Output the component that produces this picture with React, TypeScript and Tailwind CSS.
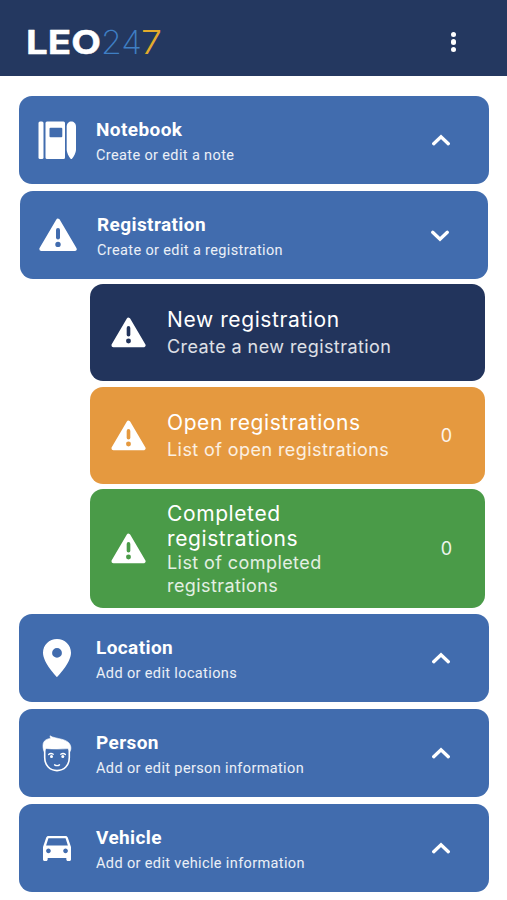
import React, { useState } from 'react';

interface IconProps {
    className?: string;
}

const NotebookIcon = ({ className }: IconProps) => (
    <svg viewBox="0 0 38 38" className={className} fill="currentColor">
        <rect x="0.5" y="0.5" width="5" height="37.5" rx="1.5" />
        <path fillRule="evenodd" d="M9 .5h16.500a1.500 1.500 0 0 1 1.500 1.500v34.500a1.500 1.500 0 0 1-1.500 1.500H9a1.500 1.500 0 0 1-1.500-1.500V2A1.500 1.500 0 0 1 9 .5Zm3.500 6.200a1 1 0 0 0-1 1v7.600a1 1 0 0 0 1 1h10.800a1 1 0 0 0 1-1V7.700a1 1 0 0 0-1-1Z" />
        <path d="M28.700 5.500C28.700 2.500 30.800.5 33.300.5S38 2.500 38 5.500V29c0 2.500-2.200 6.500-3.800 8.400q-.9 1-1.800 0C30.800 35.500 28.700 31.500 28.700 29Z" />
    </svg>
);

const WarningIcon = ({ className }: IconProps) => (
    <svg viewBox="0 0 38 34" className={className}>
        <path d="M19 2.800 35.600 31H2.400Z" fill="currentColor" stroke="currentColor" strokeWidth="4.200" strokeLinejoin="round" />
        <path d="M19 12v7.500" fill="none" className="stroke-(--card)" strokeWidth="4" strokeLinecap="round" />
        <circle cx="19" cy="26.400" r="2.700" className="fill-(--card)" />
    </svg>
);

const PinIcon = ({ className }: IconProps) => (
    <svg viewBox="0 0 28 38" className={className} fill="currentColor">
        <path fillRule="evenodd" d="M14 0C6.200 0 0 6.100 0 13.700 0 24 14 38 14 38s14-14 14-24.300C28 6.100 21.800 0 14 0Zm0 9a4.900 4.900 0 1 1 0 9.800A4.900 4.900 0 0 1 14 9Z" />
    </svg>
);

const PersonIcon = ({ className }: IconProps) => (
    <svg viewBox="0 0 30 37" className={className} fill="none" stroke="currentColor" strokeLinecap="round">
        <path d="M2.700 13v9.500C2.700 30.500 8 35.600 15 35.600s12.300-5.100 12.300-13.100V13" strokeWidth="1.600" />
        <path d="M2.200 16.800C.9 14.300.7 10.500 1.300 8.200 2.200 5.200 5 3.800 8.500 3.400L8 .8c3 1.900 7 2.200 11.500 3.400 5 1.200 8.800 3.600 9.300 7.800.2 2-.1 3.600-1 4.800l-1.600-3.200c-7 .5-15 .6-22.400-.1Z" fill="currentColor" strokeWidth=".6" strokeLinejoin="round" />
        <path d="M6.600 19.500c1.300-1.200 3.200-1.200 4.700-.3M18.700 19.200c1.500-.9 3.400-.9 4.700.3" strokeWidth="1.300" />
        <circle cx="9.500" cy="21.400" r="1.500" fill="currentColor" stroke="none" />
        <circle cx="20.800" cy="21.400" r="1.500" fill="currentColor" stroke="none" />
        <path d="M12.600 29.800c1.400.9 3.500.9 4.900 0" strokeWidth="1.400" />
    </svg>
);

const CarIcon = ({ className }: IconProps) => (
    <svg viewBox="3 5 18 16" preserveAspectRatio="none" className={className} fill="currentColor">
        <path d="M18.920 6.010C18.720 5.420 18.160 5 17.500 5h-11c-.66 0-1.210.42-1.420 1.010L3 12v8c0 .55.45 1 1 1h1c.55 0 1-.45 1-1v-1h12v1c0 .55.45 1 1 1h1c.55 0 1-.45 1-1v-8l-2.080-5.990zM6.500 16c-.83 0-1.500-.67-1.500-1.500S5.670 13 6.500 13s1.500.67 1.500 1.500S7.330 16 6.500 16zm11 0c-.83 0-1.500-.67-1.500-1.500s.67-1.500 1.500-1.500 1.500.67 1.500 1.500-.67 1.500-1.500 1.500zM5 11l1.500-4.500h11L19 11H5z" />
    </svg>
);

const Chevron = ({ open }: { open: boolean }) => (
    <svg viewBox="0 0 20 12" className={open ? 'mt-px w-5 h-3 rotate-180' : 'w-5 h-3'} fill="none" stroke="currentColor" strokeWidth="3.300">
        <path d="m2.700 9.700 7.300-7 7.300 7" strokeLinecap="round" />
    </svg>
);

const Logo = () => (
    <svg width="142" height="48" viewBox="0 0 142 48" className="font-[Inter,sans-serif] text-[33px]">
        <text x="0" y="36" fontWeight="700" fill="#ffffff" stroke="#ffffff" strokeWidth="0.4" strokeLinejoin="round" textLength="75" lengthAdjust="spacingAndGlyphs">LEO</text>
        <text x="75" y="36" fontWeight="200" fill="#3f7fc4" textLength="41" lengthAdjust="spacingAndGlyphs">24</text>
        <text x="115" y="36" fontWeight="300" fill="#e3ab2c" textLength="21" lengthAdjust="spacingAndGlyphs">7</text>
    </svg>
);

interface SubItem {
    title: string;
    subtitle: string;
    count?: number;
    className: string;
}

const subItems: SubItem[] = [
    {
        title: 'New registration',
        subtitle: 'Create a new registration',
        className: 'h-[97px] mb-1.5 bg-[#22345c] [--card:#22345c] [--gap:3px]',
    },
    {
        title: 'Open registrations',
        subtitle: 'List of open registrations',
        count: 0,
        className: 'h-[97px] mb-[5px] bg-[#e5993f] [--card:#e5993f] [--gap:3px]',
    },
    {
        title: 'Completed registrations',
        subtitle: 'List of completed registrations',
        count: 0,
        className: 'h-[119px] bg-[#4a9b48] [--card:#4a9b48] [--gap:0px]',
    },
];

const SubCard = ({ title, subtitle, count, className }: SubItem) => (
    <div className={`flex items-center rounded-[13px] pl-[21px] pr-[33px] text-white ${className}`}>
        <WarningIcon className="w-[35px] h-[31px] shrink-0" />
        <div className="ml-[21px] w-[230px] font-[Inter,sans-serif]">
            <div className="text-[21px] leading-[25px] tracking-[0.6px]">{title}</div>
            <div className="pt-(--gap) text-[18px] leading-[23px] tracking-[0.42px] text-white/85">{subtitle}</div>
        </div>
        {count !== undefined && (
            <span className="ml-auto font-[Inter,sans-serif] text-[18px] text-white/90">{count}</span>
        )}
    </div>
);

interface MenuCardProps {
    title: string;
    subtitle: string;
    icon: React.ReactNode;
    open?: boolean;
    onClick?: () => void;
    className?: string;
}

const MenuCard = ({ title, subtitle, icon, open = false, onClick, className = '' }: MenuCardProps) => (
    <button
        onClick={onClick}
        className={`flex items-center h-[88px] rounded-[13px] bg-[#416cae] [--card:#416cae] pl-[18px] pr-[38px] text-left text-white ${className}`}
    >
        <span className="flex w-[39px] justify-center">{icon}</span>
        <span className="ml-5 flex flex-col pt-1">
            <span className="text-[19px] leading-6 font-bold tracking-[0.4px]">{title}</span>
            <span className="mt-1 text-[14.5px] leading-5 tracking-[0.37px] text-white/90">{subtitle}</span>
        </span>
        <span className="ml-auto"><Chevron open={open} /></span>
    </button>
);

const App = () => {
    const [registrationOpen, setRegistrationOpen] = useState<boolean>(true);

    return (
        <div className="h-[900px] overflow-hidden bg-white font-[Roboto,sans-serif]">
            <header className="flex h-[76px] items-center justify-between bg-[#243860] pl-[26px] pr-[51px] pt-2">
                <Logo />
                <button className="flex flex-col gap-0.5" aria-label="Menu">
                    <span className="h-[5.5px] w-[5.5px] rounded-full bg-white" />
                    <span className="h-[5.5px] w-[5.5px] rounded-full bg-white" />
                    <span className="h-[5.5px] w-[5.5px] rounded-full bg-white" />
                </button>
            </header>
            <main className="flex flex-col pl-[19px] pr-[18px] pt-5">
                <MenuCard title="Notebook" subtitle="Create or edit a note" icon={<NotebookIcon className="w-[38px] h-[38px]" />} className="mb-[7px]" />
                <MenuCard
                    title="Registration"
                    subtitle="Create or edit a registration"
                    icon={<WarningIcon className="w-[38px] h-[34px]" />}
                    open={registrationOpen}
                    onClick={() => setRegistrationOpen(!registrationOpen)}
                    className="mx-px mb-[5px]"
                />
                {registrationOpen && (
                    <div className="mb-1.5 ml-[71px] mr-1 flex flex-col">
                        {subItems.map((item) => (
                            <SubCard key={item.title} {...item} />
                        ))}
                    </div>
                )}
                <MenuCard title="Location" subtitle="Add or edit locations" icon={<PinIcon className="w-7 h-[38px]" />} className="mb-[7px]" />
                <MenuCard title="Person" subtitle="Add or edit person information" icon={<PersonIcon className="w-[30px] h-[37px]" />} className="mb-[7px]" />
                <MenuCard title="Vehicle" subtitle="Add or edit vehicle information" icon={<CarIcon className="w-[28px] h-[25px]" />} />
            </main>
        </div>
    );
};

export default App;
